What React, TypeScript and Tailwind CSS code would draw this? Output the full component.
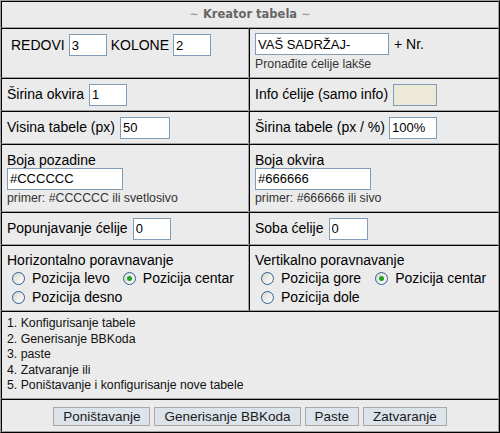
const cell =
  "border border-t-black border-l-black border-r-[#a0a0a0] border-b-[#a0a0a0] flex";
const input =
  "h-[22px] border border-[#7f9db9] px-[2px] text-[13px] text-black outline-none";

function Radio({ checked }: { checked?: boolean }) {
  return (
    <span className="flex h-[13px] w-[13px] shrink-0 items-center justify-center rounded-full border border-[#2b5f93] bg-linear-to-br from-[#d8d8d2] to-white">
      {checked && <span className="h-[5px] w-[5px] rounded-full bg-[#21a121]" />}
    </span>
  );
}

function Option({ label, checked }: { label: string; checked?: boolean }) {
  return (
    <span className="flex items-center gap-[7px]">
      <Radio checked={checked} />
      {label}
    </span>
  );
}

export default function App() {
  return (
    <div className="flex h-[433px] w-[500px] flex-col border border-t-[#a0a0a0] border-l-[#a0a0a0] border-r-black border-b-black bg-[#ebebeb] font-['Liberation_Sans',Arial,sans-serif] text-[14px] text-black">
      <div className={`${cell} h-[27px] items-center justify-center font-['DejaVu_Sans',Verdana,sans-serif] text-[11.5px] font-bold text-[#666]`}>
        <span className="font-normal text-[#888]">∼</span>&nbsp;Kreator tabela&nbsp;
        <span className="font-normal text-[#888]">∼</span>
      </div>

      <div className="flex h-[50px]">
        <div className={`${cell} w-[248px] items-start gap-[4px] pt-[5px] pl-[9px]`}>
          <span className="leading-[22px]">REDOVI</span>
          <input className={`${input} w-[38px] bg-white`} defaultValue="3" readOnly />
          <span className="leading-[22px]">KOLONE</span>
          <input className={`${input} w-[38px] bg-white`} defaultValue="2" readOnly />
        </div>
        <div className={`${cell} flex-1 flex-col pt-[4px] pl-[5px]`}>
          <div className="flex items-center gap-[5px]">
            <input className={`${input} w-[134px] bg-white`} defaultValue="VAŠ SADRŽAJ-" readOnly />
            <span>+ Nr.</span>
          </div>
          <span className="mt-[2px] text-[12.3px] leading-[14px] text-[#333]">Pronađite ćelije lakše</span>
        </div>
      </div>

      <div className="flex h-[33px]">
        <div className={`${cell} w-[248px] items-center gap-[5px] pl-[5px]`}>
          Širina okvira
          <input className={`${input} w-[38px] bg-white`} defaultValue="1" readOnly />
        </div>
        <div className={`${cell} flex-1 items-center gap-[5px] pl-[5px]`}>
          Info ćelije (samo info)
          <input className={`${input} w-[44px] bg-[#ece9d8]`} readOnly />
        </div>
      </div>

      <div className="flex h-[33px]">
        <div className={`${cell} w-[248px] items-center gap-[5px] pl-[5px]`}>
          Visina tabele (px)
          <input className={`${input} w-[50px] bg-white`} defaultValue="50" readOnly />
        </div>
        <div className={`${cell} flex-1 items-center gap-[4px] pl-[5px]`}>
          Širina tabele (px / %)
          <input className={`${input} w-[48px] bg-white`} defaultValue="100%" readOnly />
        </div>
      </div>

      <div className="flex h-[68px]">
        <div className={`${cell} w-[248px] flex-col justify-center pl-[5px]`}>
          <span className="leading-[16px]">Boja pozadine</span>
          <input className={`${input} w-[116px] bg-white`} defaultValue="#CCCCCC" readOnly />
          <span className="mt-[1px] text-[12.3px] leading-[14px] text-[#333]">primer: #CCCCCC ili svetlosivo</span>
        </div>
        <div className={`${cell} flex-1 flex-col justify-center pl-[5px]`}>
          <span className="leading-[16px]">Boja okvira</span>
          <input className={`${input} w-[116px] bg-white`} defaultValue="#666666" readOnly />
          <span className="mt-[1px] text-[12.3px] leading-[14px] text-[#333]">primer: #666666 ili sivo</span>
        </div>
      </div>

      <div className="flex h-[33px]">
        <div className={`${cell} w-[248px] items-center gap-[5px] pl-[5px]`}>
          Popunjavanje ćelije
          <input className={`${input} w-[38px] bg-white`} defaultValue="0" readOnly />
        </div>
        <div className={`${cell} flex-1 items-center gap-[5px] pl-[5px]`}>
          Soba ćelije
          <input className={`${input} w-[39px] bg-white`} defaultValue="0" readOnly />
        </div>
      </div>

      <div className="flex h-[66px]">
        <div className={`${cell} w-[248px] flex-col justify-center pt-[2px] pl-[5px]`}>
          <span className="leading-[18px]">Horizontalno poravnavanje</span>
          <div className="flex h-[19px] items-center gap-[13px] pl-[5px]">
            <Option label="Pozicija levo" />
            <Option label="Pozicija centar" checked />
          </div>
          <div className="flex h-[19px] items-center pl-[5px]">
            <Option label="Pozicija desno" />
          </div>
        </div>
        <div className={`${cell} flex-1 flex-col justify-center pt-[2px] pl-[5px]`}>
          <span className="leading-[18px]">Vertikalno poravnavanje</span>
          <div className="flex h-[19px] items-center gap-[14px] pl-[6px]">
            <Option label="Pozicija gore" />
            <Option label="Pozicija centar" checked />
          </div>
          <div className="flex h-[19px] items-center pl-[6px]">
            <Option label="Pozicija dole" />
          </div>
        </div>
      </div>

      <div className={`${cell} h-[88px] flex-col justify-center pl-[5px] text-[12.3px] leading-[15.5px] text-[#111]`}>
        <span>1. Konfigurisanje tabele</span>
        <span>2. Generisanje BBKoda</span>
        <span>3. paste</span>
        <span>4. Zatvaranje ili</span>
        <span>5. Poništavanje i konfigurisanje nove tabele</span>
      </div>

      <div className={`${cell} h-[33px] items-center justify-center gap-[4px] pt-[1px]`}>
        {["Poništavanje", "Generisanje BBKoda", "Paste", "Zatvaranje"].map((b) => (
          <button
            key={b}
            className="h-[19px] border border-[#a8a8a8] bg-[#dde3ea] px-[9px] text-[13.5px] leading-[17px] text-[#1a1a1a]"
          >
            {b}
          </button>
        ))}
      </div>
    </div>
  );
}
